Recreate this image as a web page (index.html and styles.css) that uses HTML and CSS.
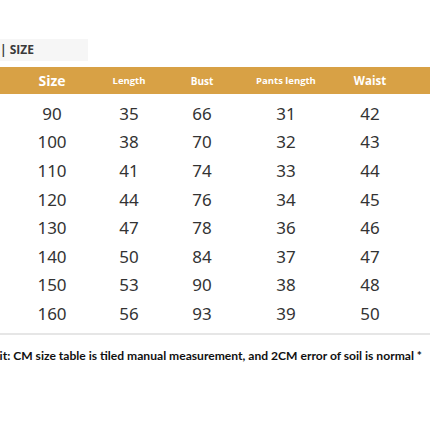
FILE: index.html
```html
<!DOCTYPE html>
<html lang="en">
<head>
    <meta charset="UTF-8">
    <meta name="viewport" content="width=device-width, initial-scale=1.0">
    <title>Size Chart</title>
    <link rel="stylesheet" href="styles.css">
</head>
<body>
    <div class="page">
        <div class="title">| SIZE</div>

        <div class="row head">
            <div class="big">Size</div>
            <div>Length</div>
            <div class="mid">Bust</div>
            <div>Pants length</div>
            <div class="big2">Waist</div>
        </div>

        <div class="rows">
            <div class="row"><div>90</div><div>35</div><div>66</div><div>31</div><div>42</div></div>
            <div class="row"><div>100</div><div>38</div><div>70</div><div>32</div><div>43</div></div>
            <div class="row"><div>110</div><div>41</div><div>74</div><div>33</div><div>44</div></div>
            <div class="row"><div>120</div><div>44</div><div>76</div><div>34</div><div>45</div></div>
            <div class="row"><div>130</div><div>47</div><div>78</div><div>36</div><div>46</div></div>
            <div class="row"><div>140</div><div>50</div><div>84</div><div>37</div><div>47</div></div>
            <div class="row"><div>150</div><div>53</div><div>90</div><div>38</div><div>48</div></div>
            <div class="row"><div>160</div><div>56</div><div>93</div><div>39</div><div>50</div></div>
        </div>

        <div class="divider"></div>

        <p class="note">Unit: CM size table is tiled manual measurement, and 2CM error of soil is normal *</p>
    </div>
</body>
</html>
```

FILE: styles.css
```css
body {
    margin: 0;
    background-color: #fff;
    font-family: "Noto Sans", sans-serif;
    overflow: hidden;
}

.page {
    width: 430px;
    height: 430px;
    padding-top: 39px;
    box-sizing: border-box;
}

.title {
    width: 88px;
    height: 22px;
    line-height: 22px;
    background-color: #f6f6f6;
    color: #3a3a3a;
    font-family: "Open Sans", sans-serif;
    font-weight: bold;
    font-size: 12px;
}

.row {
    display: grid;
    grid-template-columns: 76px 78px 68px 100px 68px;
    padding-left: 14px;
    align-items: center;
    text-align: center;
}

.head {
    margin-top: 6px;
    height: 27px;
    background-color: #d8a145;
    color: #fff;
    font-family: "Open Sans", sans-serif;
    font-weight: bold;
    font-size: 9.5px;
}

.head .big {
    font-size: 14px;
}

.head .mid {
    font-size: 10px;
}

.head .big2 {
    font-size: 11.5px;
}

.rows {
    margin-top: 5px;
}

.rows .row {
    height: 28.6px;
    color: #333;
    font-size: 17px;
}

.divider {
    margin-top: 5px;
    height: 2px;
    background-color: #e6e6e6;
}

.note {
    margin: 13px 0 0 -16px;
    font-family: "Lato", sans-serif;
    font-weight: bold;
    font-size: 12.1px;
    color: #111;
    white-space: nowrap;
}
```
